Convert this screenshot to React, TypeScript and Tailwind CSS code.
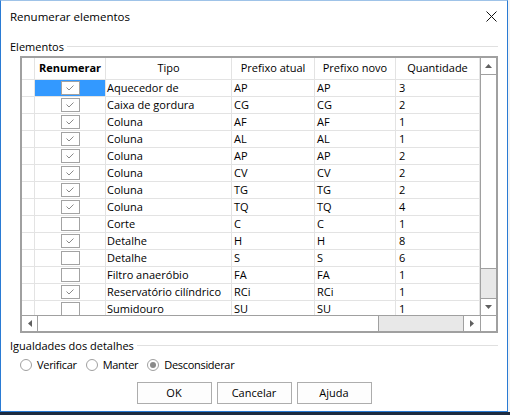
import React from 'react';

type Row = { on: boolean; tipo: string; atual: string; novo: string; qtd: string };

const rows: Row[] = [
  { on: true, tipo: 'Aquecedor de', atual: 'AP', novo: 'AP', qtd: '3' },
  { on: true, tipo: 'Caixa de gordura', atual: 'CG', novo: 'CG', qtd: '2' },
  { on: true, tipo: 'Coluna', atual: 'AF', novo: 'AF', qtd: '1' },
  { on: true, tipo: 'Coluna', atual: 'AL', novo: 'AL', qtd: '1' },
  { on: true, tipo: 'Coluna', atual: 'AP', novo: 'AP', qtd: '2' },
  { on: true, tipo: 'Coluna', atual: 'CV', novo: 'CV', qtd: '2' },
  { on: true, tipo: 'Coluna', atual: 'TG', novo: 'TG', qtd: '2' },
  { on: true, tipo: 'Coluna', atual: 'TQ', novo: 'TQ', qtd: '4' },
  { on: false, tipo: 'Corte', atual: 'C', novo: 'C', qtd: '1' },
  { on: true, tipo: 'Detalhe', atual: 'H', novo: 'H', qtd: '8' },
  { on: false, tipo: 'Detalhe', atual: 'S', novo: 'S', qtd: '6' },
  { on: false, tipo: 'Filtro anaeróbio', atual: 'FA', novo: 'FA', qtd: '1' },
  { on: true, tipo: 'Reservatório cilíndrico', atual: 'RCi', novo: 'RCi', qtd: '1' },
  { on: false, tipo: 'Sumidouro', atual: 'SU', novo: 'SU', qtd: '1' },
];

function Check({ on }: { on: boolean }) {
  return (
    <div className="w-[19px] h-[14px] border border-[#a3a3a3] bg-white flex items-center justify-center">
      {on && (
        <svg width="8" height="6" viewBox="0 0 8 6">
          <path d="M0.5 2.5 L3 5 L7.5 0.5" fill="none" stroke="#8a8a8a" strokeWidth="1" />
        </svg>
      )}
    </div>
  );
}

function Arrow({ dir }: { dir: 'up' | 'down' | 'left' | 'right' }) {
  const pts = {
    up: '0,4 7,4 3.5,0',
    down: '0,0 7,0 3.5,4',
    left: '4,0 4,7 0,3.5',
    right: '0,0 0,7 4,3.5',
  }[dir];
  const vertical = dir === 'up' || dir === 'down';
  return (
    <svg width={vertical ? 7 : 4} height={vertical ? 4 : 7} viewBox={vertical ? '0 0 7 4' : '0 0 4 7'}>
      <polygon points={pts} fill="#606060" />
    </svg>
  );
}

function Radio({ checked, label }: { checked?: boolean; label: string }) {
  return (
    <div className="flex items-center">
      <div className="w-[12px] h-[12px] rounded-full border border-[#a0a0a0] bg-white flex items-center justify-center">
        {checked && <div className="w-[6px] h-[6px] rounded-full bg-[#8a8a8a]" />}
      </div>
      <span className="ml-[5px] tracking-[-0.3px]">{label}</span>
    </div>
  );
}

export default function App() {
  return (
    <div
      className="w-[510px] h-[415px] bg-white flex flex-col overflow-hidden text-[11px] text-black"
      style={{ fontFamily: '"Open Sans", "Noto Sans", sans-serif' }}
    >
      <div className="flex">
        <div className="w-[508px] h-[412px] border-t border-t-[#9fc3e8] border-x border-b border-[#2a7bd4] flex flex-col bg-white">
          {/* Title bar */}
          <div className="h-[31px] flex items-center justify-between pl-[9px] pr-[10px]">
            <span className="text-[11.5px]">Renumerar elementos</span>
            <svg width="11" height="11" viewBox="0 0 11 11">
              <path d="M0.5 0.5 L10.5 10.5 M10.5 0.5 L0.5 10.5" stroke="#111" strokeWidth="1" />
            </svg>
          </div>

          {/* Elementos group */}
          <div className="mt-[8px] h-[14px] flex items-center pl-[9px] pr-[9px]">
            <span className="leading-[14px]">Elementos</span>
            <div className="flex-1 h-px bg-[#e0e0e0] ml-[3px] -mt-[2px]" />
          </div>

          <div className="mt-[2px] ml-[19px] w-[478px] h-[277px] border-2 border-[#a0a0a0] flex flex-col">
            <div className="flex h-[257px]">
              <div className="w-[458px] overflow-hidden">
                {/* Header */}
                <div className="flex h-[22px]">
                  <div className="w-[13px] border-r border-b border-[#e3e3e3]" />
                  <div className="w-[71px] border-r border-b border-[#e3e3e3] flex items-center justify-center font-bold">Renumerar</div>
                  <div className="w-[126px] border-r border-b border-[#e3e3e3] flex items-center justify-center">Tipo</div>
                  <div className="w-[83px] border-r border-b border-[#e3e3e3] flex items-center justify-center">Prefixo atual</div>
                  <div className="w-[81px] border-r border-b border-[#e3e3e3] flex items-center justify-center">Prefixo novo</div>
                  <div className="w-[84px] border-r border-b border-[#e3e3e3] flex items-center justify-center">Quantidade</div>
                </div>
                {rows.map((r, i) => (
                  <div key={i} className="flex h-[17px] leading-[16px]">
                    <div className="w-[13px] border-r border-b border-[#e3e3e3]" />
                    <div className={`w-[71px] border-r border-b border-[#e3e3e3] flex items-center justify-center ${i === 0 ? 'bg-[#3399ff]' : ''}`}>
                      <Check on={r.on} />
                    </div>
                    <div className="w-[126px] border-r border-b border-[#e3e3e3] pl-[1px] whitespace-nowrap overflow-hidden">{r.tipo}</div>
                    <div className="w-[83px] border-r border-b border-[#e3e3e3] pl-[2px]">{r.atual}</div>
                    <div className="w-[81px] border-r border-b border-[#e3e3e3] pl-[2px]">{r.novo}</div>
                    <div className="w-[84px] border-r border-b border-[#e3e3e3] pl-[3px]">{r.qtd}</div>
                  </div>
                ))}
              </div>
              {/* Vertical scrollbar */}
              <div className="w-[16px] border-l border-[#a0a0a0] flex flex-col">
                <div className="h-[17px] border-b border-[#a0a0a0] flex items-center justify-center">
                  <Arrow dir="up" />
                </div>
                <div className="flex-1 flex flex-col justify-end">
                  <div className="h-[30px] bg-[#e8e8e8] border-t border-[#a0a0a0]" />
                </div>
                <div className="h-[17px] border-t border-[#a0a0a0] flex items-center justify-center">
                  <Arrow dir="down" />
                </div>
              </div>
            </div>
            {/* Horizontal scrollbar */}
            <div className="flex h-[16px] border-t border-[#a0a0a0]">
              <div className="w-[16px] border-r border-[#a0a0a0] flex items-center justify-center">
                <Arrow dir="left" />
              </div>
              <div className="flex-1 flex justify-end">
                <div className="w-[85px] bg-[#e8e8e8] border-l border-[#a0a0a0]" />
              </div>
              <div className="w-[17px] border-l border-[#a0a0a0] flex items-center justify-center">
                <Arrow dir="right" />
              </div>
              <div className="w-[16px] border-l border-[#a0a0a0]" />
            </div>
          </div>

          {/* Igualdades group */}
          <div className="mt-[6px] h-[14px] flex items-center pl-[9px] pr-[9px]">
            <span className="leading-[14px]">Igualdades dos detalhes</span>
            <div className="flex-1 h-px bg-[#e0e0e0] ml-[3px] -mt-[2px]" />
          </div>
          <div className="mt-[5px] h-[14px] flex items-center gap-[9px] pl-[19px]">
            <Radio label="Verificar" />
            <Radio label="Manter" />
            <Radio label="Desconsiderar" checked />
          </div>

          {/* Buttons */}
          <div className="mt-[10px] flex justify-center gap-[5px]">
            <button className="w-[75px] h-[22px] border border-[#adadad] bg-[#fdfdfd]">OK</button>
            <button className="w-[75px] h-[22px] border border-[#adadad] bg-[#fdfdfd]">Cancelar</button>
            <button className="w-[75px] h-[22px] border border-[#adadad] bg-[#fdfdfd]">Ajuda</button>
          </div>
        </div>
        <div className="w-[2px] bg-[#f4f4f4]" />
      </div>
      <div className="h-[3px] bg-[#1d2b3f]" />
    </div>
  );
}
